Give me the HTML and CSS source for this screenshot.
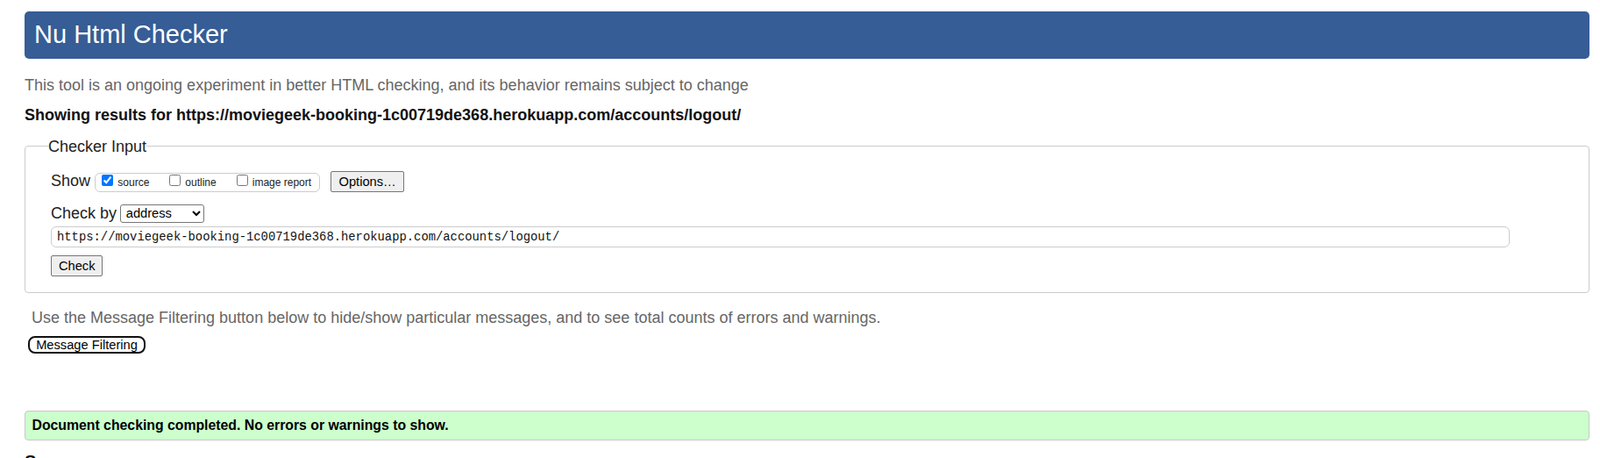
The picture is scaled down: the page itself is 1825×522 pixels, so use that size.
FILE: index.html
```html
<!DOCTYPE html>
<html lang="en">
<head>
<meta charset="utf-8">
<title>Nu Html Checker</title>
<link rel="stylesheet" href="styles.css">
</head>
<body>
<h1 class="title">Nu Html Checker</h1>
<p class="intro">This tool is an ongoing experiment in better HTML checking, and its behavior remains subject to change</p>
<p class="showing">Showing results for https://moviegeek-booking-1c00719de368.herokuapp.com/accounts/logout/</p>
<form class="form">
  <fieldset class="checker">
    <legend class="legend">Checker Input</legend>
    <div class="show-row">
      <span class="lbl show-lbl">Show</span>
      <span class="opts">
        <label class="opt"><input class="cb" type="checkbox" checked><span class="opt-text">source</span></label>
        <label class="opt"><input class="cb" type="checkbox"><span class="opt-text">outline</span></label>
        <label class="opt"><input class="cb" type="checkbox"><span class="opt-text">image report</span></label>
      </span>
      <button type="button" class="btn options">Options…</button>
    </div>
    <div class="check-by">
      <span class="lbl">Check by</span>
      <select class="sel"><option>address</option><option>file upload</option><option>text input</option></select>
    </div>
    <input class="url" type="text" value="https://moviegeek-booking-1c00719de368.herokuapp.com/accounts/logout/">
    <button type="button" class="btn check">Check</button>
  </fieldset>
</form>
<p class="filter-note">Use the Message Filtering button below to hide/show particular messages, and to see total counts of errors and warnings.</p>
<button type="button" class="filter-btn">Message Filtering</button>
<div class="success">Document checking completed. No errors or warnings to show.</div>
<h2 class="source">Source</h2>
</body>
</html>
```
FILE: styles.css
```css
html, body {
  background: #fff;
}
body {
  margin: 0;
  padding: 13px 12px 0 28px;
  font-family: "Liberation Sans", Arial, sans-serif;
  font-size: 18px;
  line-height: 20px;
  color: #111;
}
.title {
  margin: 0;
  height: 54px;
  box-sizing: border-box;
  padding: 0 11px;
  background: #365d95;
  color: #fff;
  font-weight: normal;
  font-size: 29px;
  line-height: 52px;
  border-radius: 5px;
}
.intro {
  margin: 20px 0 0;
  color: #666;
}
.showing {
  margin: 14px 0 0;
  font-weight: bold;
  color: #111;
}
.form {
  margin: 0;
}
.checker {
  margin: 15.7px 0 0;
  padding: 18.3px 0 18px 29px;
  border: 1px solid #ccc;
  border-radius: 4px;
  min-width: 0;
}
.legend {
  padding: 0;
  margin-left: -3px;
  color: #222;
  font-size: 18px;
  line-height: 20px;
}
.show-row {
  display: flex;
  align-items: flex-end;
}
.lbl {
  color: #222;
}
.show-lbl {
  margin: 0 5.3px 2.5px 0;
}
.opts {
  display: flex;
  height: 22px;
  box-sizing: border-box;
  border: 1px solid #ccc;
  border-radius: 6px;
  padding: 0 9px 0 7px;
  gap: 23px;
  font-size: 12px;
  line-height: 14px;
  color: #222;
}
.opt {
  display: flex;
  align-items: flex-start;
}
.cb {
  margin: 1.3px 5px 0 0;
  width: 13px;
  height: 13px;
}
.opt-text {
  margin-top: 3.5px;
}
.btn {
  font-family: "Liberation Sans", Arial, sans-serif;
  font-size: 14.67px;
  background: #efefef;
  border: 1px solid #767676;
  border-radius: 2px;
  color: #000;
  padding: 0;
  box-sizing: border-box;
}
.options {
  margin-left: 12px;
  width: 84px;
  height: 24px;
}
.check-by {
  display: flex;
  align-items: center;
  gap: 3.7px;
  margin-top: 14px;
  height: 21px;
}
.sel {
  width: 96px;
  height: 20.4px;
  box-sizing: border-box;
  font-family: "Liberation Sans", Arial, sans-serif;
  font-size: 14.67px;
  color: #000;
  background: #fff;
  border: 1px solid #767676;
  border-radius: 3px;
  padding: 0 0 0 2px;
}
.url {
  display: block;
  margin-top: 3.8px;
  width: 1664px;
  height: 24.4px;
  box-sizing: border-box;
  border: 1px solid #ccc;
  border-radius: 6px;
  padding: 0 6px;
  font-family: "Liberation Mono", monospace;
  font-size: 13.85px;
  color: #111;
  background: #fff;
}
.check {
  display: block;
  margin-top: 9.3px;
  width: 59.4px;
  height: 23.3px;
}
.filter-note {
  margin: 18.3px 0 0;
  padding-left: 8px;
  color: #666;
}
.filter-btn {
  display: block;
  margin: 10.7px 0 0 4.3px;
  width: 133.4px;
  height: 20.4px;
  box-sizing: border-box;
  border: 2px solid #111;
  border-radius: 8px;
  background: #fff;
  color: #000;
  padding: 0;
  font-family: "Liberation Sans", Arial, sans-serif;
  font-size: 14.67px;
}
.success {
  margin-top: 65px;
  height: 34px;
  box-sizing: border-box;
  border: 1px solid #c8c8c8;
  border-radius: 4px;
  background: #ccffcc;
  padding: 6px 7.5px;
  font-size: 15.8px;
  font-weight: bold;
  color: #000;
}
.source {
  margin: 12px 0 0;
  font-size: 20px;
  line-height: 24px;
  color: #111;
}
```
